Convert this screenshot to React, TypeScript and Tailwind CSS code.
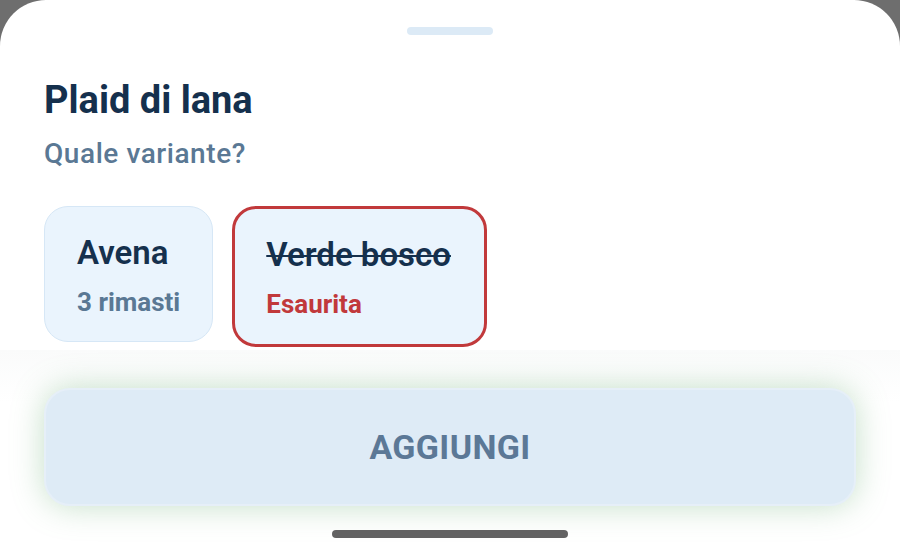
import React from 'react';

type Variant = { name: string; note: string; soldOut?: boolean };

const variants: Variant[] = [
    { name: 'Avena', note: '3 rimasti' },
    { name: 'Verde bosco', note: 'Esaurita', soldOut: true },
];

export default function App() {
    return (
        <div className="w-[900px] h-[560px] bg-[#6e6e6e] overflow-hidden" style={{ fontFamily: 'Roboto, "Noto Sans", sans-serif' }}>
            <div className="relative h-full bg-white rounded-t-[46px] flex flex-col">
                {/* drag handle */}
                <div className="flex justify-center pt-[27px]">
                    <div className="w-[86px] h-[8px] rounded-full bg-[#dceaf6]"></div>
                </div>

                <div className="px-11">
                    <h1 className="mt-[42px] text-[38px] leading-[46px] font-bold text-[#15304d]">Plaid di lana</h1>
                    <p className="mt-[14px] text-[28px] leading-[34px] font-medium tracking-[0.02em] text-[#5a7894]">Quale variante?</p>

                    <div className="mt-[35px] flex items-start gap-[19px]">
                        {variants.map((v) => (
                            <div
                                key={v.name}
                                className={
                                    v.soldOut
                                        ? 'rounded-[24px] border-[3px] border-[#c1393b] bg-[#eaf4fd] pl-[31px] pr-[33px] pt-[26px] pb-[24px]'
                                        : 'rounded-[24px] border border-[#d6e7f6] bg-[#eaf4fd] px-8 pt-[26px] pb-[23px]'
                                }
                            >
                                <div className={v.soldOut ? 'text-[33px] leading-[40px] font-semibold text-[#15304d] line-through decoration-2' : 'text-[33px] leading-[40px] font-semibold text-[#15304d]'}>
                                    {v.name}
                                </div>
                                <div className={v.soldOut ? 'mt-[13px] text-[26px] leading-[32px] font-bold text-[#c1393b]' : 'mt-[13px] text-[26px] leading-[32px] font-bold text-[#5a7894]'}>
                                    {v.note}
                                </div>
                            </div>
                        ))}
                    </div>
                </div>

                {/* footer */}
                <div className="mt-auto bg-gradient-to-b from-[#fafbfb] to-white to-[25%] px-11 pt-[38px] pb-[22px] flex flex-col items-center">
                    <button className="w-full h-[118px] rounded-[26px] bg-[#deebf6] border-2 border-[#e6eff8] shadow-[0_0_32px_rgba(100,170,110,0.38)] text-[34px] font-bold tracking-[0.01em] text-[#5b7896]">
                        AGGIUNGI
                    </button>
                    <div className="mt-[24px] w-[236px] h-[8px] rounded-full bg-[#626262]"></div>
                </div>
            </div>
        </div>
    );
}
